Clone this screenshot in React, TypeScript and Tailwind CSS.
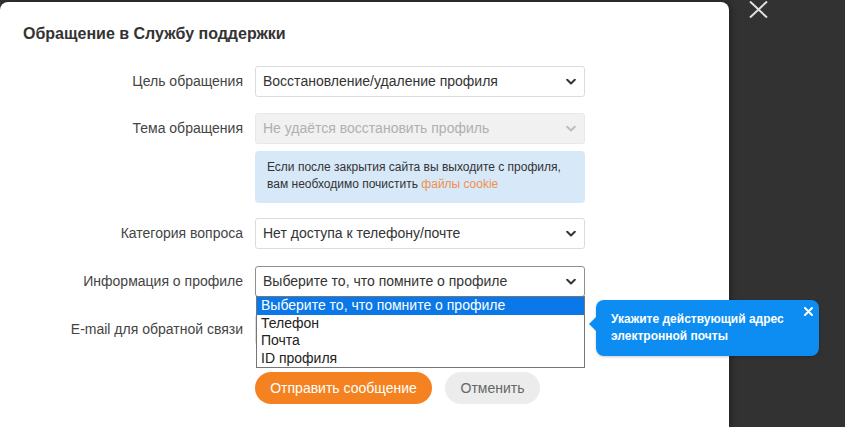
import React from "react";

const Chevron = ({ color = "#333" }: { color?: string }) => (
  <svg width="10" height="7" viewBox="0 0 10 7" className="absolute right-[8px] top-1/2 -translate-y-1/2">
    <path d="M1.2 1.3 L5 5 L8.8 1.3" fill="none" stroke={color} strokeWidth="2" strokeLinecap="round" strokeLinejoin="round" />
  </svg>
);

const Select = ({ text, disabled, focused }: { text: string; disabled?: boolean; focused?: boolean }) => (
  <div
    className={
      "relative h-[31px] w-[330px] rounded-[3px] border flex items-center pl-[7px] text-[14px] " +
      (disabled
        ? "bg-[#f1f1f1] border-[#e8e8e8] text-[#b0b0b0]"
        : focused
        ? "bg-white border-[#8f8f8f] text-[#333]"
        : "bg-white border-[#dcdcdc] text-[#333]")
    }
  >
    <span>{text}</span>
    <Chevron color={disabled ? "#bdbdbd" : "#333"} />
  </div>
);

const Row = ({ label, children, className = "" }: { label: string; children: React.ReactNode; className?: string }) => (
  <div className={"flex items-center " + className}>
    <div className="w-[244px] pr-[12px] text-right text-[14px] text-[#444]">{label}</div>
    {children}
  </div>
);

export default function App() {
  return (
    <div
      className="w-[845px] h-[427px] bg-[#323232] overflow-hidden flex"
      style={{ fontFamily: '"Liberation Sans", Arial, sans-serif' }}
    >
      <div className="relative w-[729px] h-[425px] mt-[2px] bg-white rounded-t-[8px] shadow-[2px_0_6px_rgba(0,0,0,0.35)]">
        <div className="pl-[23px] pt-[22px] text-[16px] font-bold text-[#333] leading-[20px]">
          Обращение в Службу поддержки
        </div>
        <div className="pl-[11px] pt-[22px] flex flex-col">
          <Row label="Цель обращения">
            <Select text="Восстановление/удаление профиля" />
          </Row>
          <Row label="Тема обращения" className="mt-[16px]">
            <Select text="Не удаётся восстановить профиль" disabled />
          </Row>
          <div className="ml-[244px] mt-[7px] w-[330px] h-[52px] rounded-[4px] bg-[#d7e8f8] px-[12px] py-[8px] text-[12px] leading-[17px] text-[#333]">
            Если после закрытия сайта вы выходите с профиля,
            <br />
            вам необходимо почистить <span className="text-[#f0914a]">файлы cookie</span>
          </div>
          <Row label="Категория вопроса" className="mt-[15px]">
            <Select text="Нет доступа к телефону/почте" />
          </Row>
          <Row label="Информация о профиле" className="mt-[17px]">
            <div className="relative">
              <Select text="Выберите то, что помните о профиле" focused />
              <div className="absolute left-[1px] top-[30px] w-[329px] border border-[#767676] bg-white text-[14px] text-[#222] leading-[17.5px] z-10">
                <div className="bg-[#0a78e8] text-white pl-[4px]">Выберите то, что помните о профиле</div>
                <div className="pl-[4px]">Телефон</div>
                <div className="pl-[4px]">Почта</div>
                <div className="pl-[4px]">ID профиля</div>
              </div>
            </div>
          </Row>
          <Row label="E-mail для обратной связи" className="mt-[17px]">
            <div className="h-[31px] w-[330px] rounded-[3px] border border-[#dcdcdc] bg-white" />
          </Row>
          <div className="ml-[244px] mt-[27px] flex gap-[13px]">
            <button className="h-[32px] w-[177px] rounded-full bg-[#f58220] text-white text-[14px]">
              Отправить сообщение
            </button>
            <button className="h-[32px] w-[95px] rounded-full bg-[#ececec] text-[#666] text-[14px]">
              Отменить
            </button>
          </div>
        </div>

        <div className="absolute left-[596px] top-[298px] w-[223px] h-[56px] rounded-[8px] bg-[#0d8df1] text-white z-20 shadow-[0_1px_3px_rgba(0,0,0,0.2)]">
          <div className="absolute -left-[7px] top-[16px] w-0 h-0 border-y-[8px] border-y-transparent border-r-[8px] border-r-[#0d8df1]" />
          <div className="pl-[15px] pt-[11px] text-[12px] font-bold leading-[17px]">
            Укажите действующий адрес
            <br />
            электронной почты
          </div>
          <svg width="9" height="9" viewBox="0 0 9 9" className="absolute right-[6px] top-[7px]">
            <path d="M1 1 L8 8 M8 1 L1 8" stroke="white" strokeWidth="2" strokeLinecap="round" />
          </svg>
        </div>
      </div>
      <div className="ml-[20px] mt-[1px]">
        <svg width="19" height="17" viewBox="0 0 19 17">
          <path d="M1 0.5 L18 16.5 M18 0.5 L1 16.5" stroke="#e0e0e0" strokeWidth="2" />
        </svg>
      </div>
    </div>
  );
}
